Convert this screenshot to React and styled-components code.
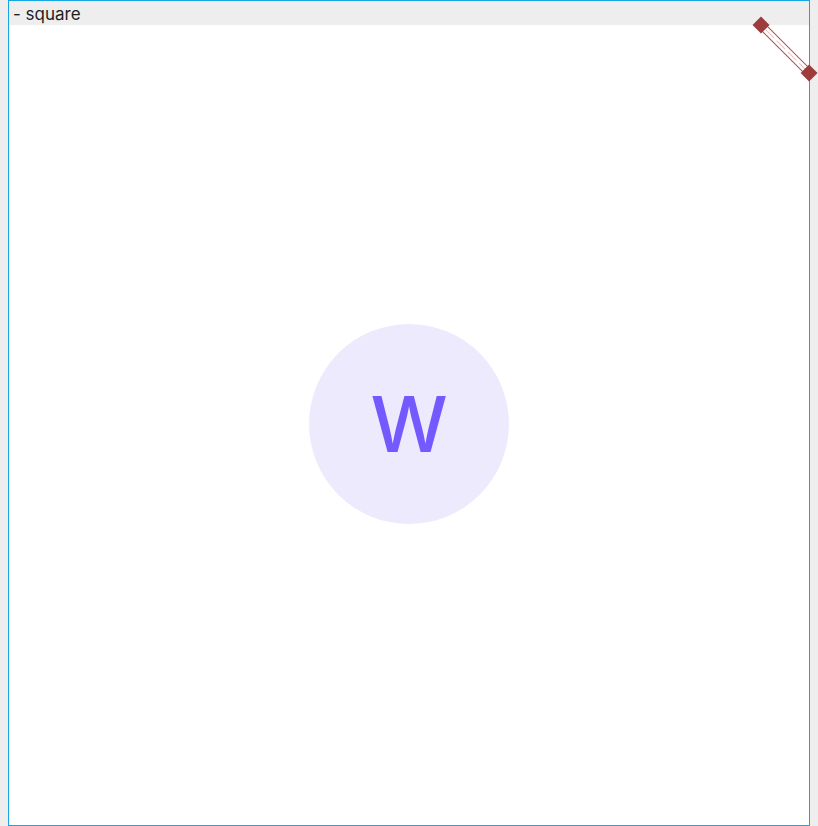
import styled, { createGlobalStyle } from "styled-components";

const Global = createGlobalStyle`
  html, body {
    margin: 0;
    padding: 0;
    background: #eeeeee;
  }
  body {
    padding-left: 8px;
    font-family: "Inter", "Roboto", sans-serif;
  }
`;

const Frame = styled.div`
  position: relative;
  width: 800px;
  border: 1px solid #16a6e6;
  background: #eeeeee;
  display: flex;
  flex-direction: column;
`;

const Header = styled.div`
  height: 24px;
  padding-left: 4px;
  font-size: 17px;
  line-height: 26px;
  color: #1e1e1e;
  overflow: hidden;
`;

const Square = styled.div`
  width: 800px;
  height: 800px;
  background: #ffffff;
  display: flex;
  align-items: center;
  justify-content: center;
`;

const Avatar = styled.div`
  width: 200px;
  height: 200px;
  margin-top: -2px;
  border-radius: 50%;
  background: #eeeafe;
  display: flex;
  align-items: center;
  justify-content: center;
  color: #7459fe;
  font-family: "Inter", "Roboto", sans-serif;
  font-weight: 500;
  font-size: 77px;
  line-height: 1;
`;

const Handle = styled.svg`
  position: absolute;
  top: 15px;
  left: 735px;
  overflow: visible;
`;

export default function App() {
  return (
    <>
      <Global />
      <Frame>
        <Header>- square</Header>
        <Square>
          <Avatar>W</Avatar>
        </Square>
        <Handle width="76" height="68" viewBox="0 0 76 68">
          <g transform="translate(17 9) rotate(45)">
            <rect x="0" y="-3.5" width="68" height="7" fill="#fff" stroke="#a34545" strokeWidth="1" opacity="0.9" />
            <line x1="6" y1="0" x2="62" y2="0" stroke="#e7c3c3" strokeWidth="1" strokeDasharray="12 4" />
            <rect x="-6" y="-6" width="12" height="12" fill="#9e3b3b" />
            <rect x="62" y="-6" width="12" height="12" fill="#9e3b3b" />
          </g>
        </Handle>
      </Frame>
    </>
  );
}
